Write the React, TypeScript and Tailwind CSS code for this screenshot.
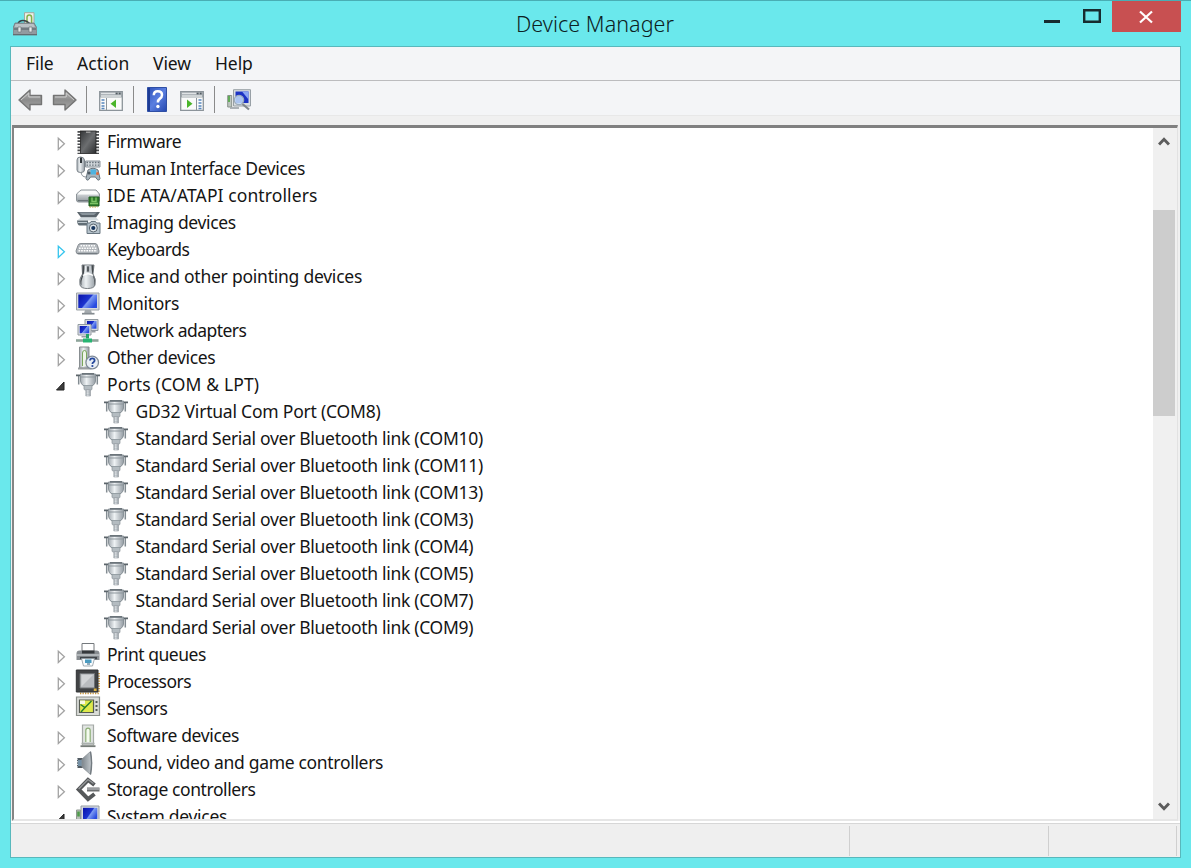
import React from "react";

type IconName =
  | "firmware" | "hid" | "ide" | "imaging" | "keyboard" | "mouse" | "monitor" | "network"
  | "other" | "port" | "printer" | "cpu" | "sensor" | "software" | "sound" | "storage" | "system";

const Defs = () => (
  <svg width="0" height="0" className="absolute" aria-hidden="true">
    <defs>
      <linearGradient id="metal" x1="0" x2="1" y1="0" y2="0">
        <stop offset="0" stopColor="#a4abb1" />
        <stop offset=".4" stopColor="#eef2f4" />
        <stop offset="1" stopColor="#959da4" />
      </linearGradient>
      <linearGradient id="metalV" x1="0" x2="0" y1="0" y2="1">
        <stop offset="0" stopColor="#f4f6f7" />
        <stop offset="1" stopColor="#8d959b" />
      </linearGradient>
      <linearGradient id="cone" x1="0" x2="1" y1="0" y2="0">
        <stop offset="0" stopColor="#7d868d" />
        <stop offset="1" stopColor="#c3c9cd" />
      </linearGradient>
      <linearGradient id="screen" x1="0" x2="1" y1="0" y2=".6">
        <stop offset="0" stopColor="#0a12a8" />
        <stop offset=".55" stopColor="#1c34d0" />
        <stop offset=".62" stopColor="#7c9af2" />
        <stop offset="1" stopColor="#2a4ce0" />
      </linearGradient>
      <linearGradient id="dark" x1="0" x2="1" y1="0" y2="1">
        <stop offset="0" stopColor="#343638" />
        <stop offset=".5" stopColor="#6c6e70" />
        <stop offset="1" stopColor="#2a2c2e" />
      </linearGradient>
      <linearGradient id="arrow" x1="0" x2="0" y1="0" y2="1">
        <stop offset="0" stopColor="#b9b9b9" />
        <stop offset=".5" stopColor="#8c8c8c" />
        <stop offset="1" stopColor="#a8a8a8" />
      </linearGradient>
      <linearGradient id="help" x1="0" x2="1" y1="0" y2="1">
        <stop offset="0" stopColor="#2c50b8" />
        <stop offset=".5" stopColor="#5b7fe0" />
        <stop offset="1" stopColor="#2447ae" />
      </linearGradient>
    </defs>
  </svg>
);

const glyphs: Record<IconName, React.ReactNode> = {
  firmware: (
    <>
      <path d="M3 1v23M21.500 1v23" stroke="#4a4c4e" strokeWidth="3" strokeDasharray="1.700 1.400" />
      <rect x="4.500" y="1" width="15.500" height="22.500" fill="url(#dark)" stroke="#222" strokeWidth=".8" />
      <path d="M10 1.500h4.500v1.500H10z" fill="#999" />
    </>
  ),
  hid: (
    <>
      <path d="M9.500 4h14.500v6h-14.500z" fill="#d3d9dd" stroke="#8b949b" />
      <path d="M10.500 5.500h13M10.500 8.200h13" stroke="#67727a" strokeWidth="1.300" strokeDasharray="1.500 1.300" />
      <path d="M1 3Q1 0 4.500 0T8.500 3v10q0 2.500-3.800 2.500T1 13z" fill="url(#metal)" stroke="#7d858c" />
      <path d="M4 .5h2V6H4z" fill="#30363a" />
      <path d="M5 15q.5 5 5 5" fill="none" stroke="#8b9399" />
      <path d="M12 13q5-3.500 10 0l2 8.500q-1.500 4-4.500-1.500h-5q-3 5.500-4.500 1.500z" fill="#a9b5bd" stroke="#69757e" />
      <path d="M14.500 12.500h5.500v5h-5.500z" fill="#4fb3df" />
      <circle cx="13" cy="16" r="1.600" fill="#4d5962" /><circle cx="21.500" cy="16.500" r="1.500" fill="#d9673d" />
    </>
  ),
  ide: (
    <>
      <path d="M5 6h15l3.500 4v6q0 2-2 2H2.500q-2 0-2-2v-6z" fill="url(#metalV)" stroke="#8d9499" />
      <path d="M2 9.500Q3.500 7 6 7h13q2 0 3 2.500v1H2z" fill="#fafbfb" />
      <path d="M2 16.500h10" stroke="#6d757a" />
      <path d="M13 13h10v9H13z" fill="#2f7d2b" stroke="#205e20" />
      <path d="M16 13.500v4h4v-4M14 19.500h8" fill="none" stroke="#7ec466" strokeWidth="1.400" />
      <path d="M13.500 23h8" stroke="#c4a23a" strokeDasharray="1.500 1" />
    </>
  ),
  imaging: (
    <>
      <path d="M1 1h23l-4 5.500H5z" fill="#59636a" />
      <path d="M3 1.500h18l-3 2.500H6z" fill="#89949b" />
      <path d="M5 6.500h15L23 9.500H1z" fill="#d2dade" />
      <path d="M1 9.500h11v5H3.500q-2 0-2.500-5z" fill="#626e76" />
      <path d="M2 11.500h9" stroke="#bcc6cc" />
      <path d="M11 12h3l1-1.500h4.500l1 1.500H24v10.500H11z" fill="#b4c1ca" stroke="#687680" />
      <circle cx="17.300" cy="17" r="4" fill="#e0e6ea" stroke="#59656e" />
      <circle cx="17.300" cy="17" r="2.100" fill="#16355d" />
    </>
  ),
  keyboard: (
    <>
      <path d="M5 5.500h14q2 0 2.500 2l1.500 5.500q.5 3-2 3H2.500q-2.500 0-2.500-3L2 7.500q.5-2 3-2z" fill="#b3b8bd" stroke="#888e93" />
      <path d="M4.500 7.700h14.500M3 10.200h17.500M2.500 12.700h18.500" stroke="#fff" strokeWidth="1.500" strokeDasharray="1.700 .9" />
      <path d="M1.500 15.500h20" stroke="#747b81" strokeWidth="1.200" />
    </>
  ),
  mouse: (
    <>
      <path d="M6 0h12l-1 9q3.500 5 2 11-1 3.500-7.500 3.500T4 20q-1.500-6 2.500-11z" fill="url(#metal)" stroke="#777d82" />
      <path d="M6.500 .2h2q.2 8-2 12.500-2 5-.6 8Q2.500 17 6.500 10zM17.500 .2h-2q.2 8 2 12.500 1.700 5 .6 8 2.500-4-1.300-11z" fill="#44494d" />
      <path d="M10.700 1h2.600v6h-2.600z" fill="#43494e" stroke="#cfd4d8" strokeWidth=".7" />
      <path d="M7 10.500q5-3.500 10 0" fill="none" stroke="#fff" strokeWidth="1.300" />
    </>
  ),
  monitor: (
    <>
      <path d="M.5 1h22.500v17H.5z" fill="#d7dadd" stroke="#9da3a8" />
      <path d="M2.300 2.500h18.700v13.500H2.300z" fill="url(#screen)" />
      <path d="M9 18h6l1 3.500H8z" fill="#a4aaae" />
      <path d="M6 21.700h12.500" stroke="#858c91" strokeWidth="1.700" />
    </>
  ),
  network: (
    <>
      <path d="M9 .5h13v11H9z" fill="#d3d8dc" stroke="#929aa1" />
      <path d="M11 2h9.500v7.700H11z" fill="url(#screen)" />
      <path d="M2 5.500h13v10.500H2z" fill="#dfe3e5" stroke="#929aa1" />
      <path d="M3.700 7h9.600v7.300H3.700z" fill="url(#screen)" />
      <path d="M5.500 17h6v1.500h-6zM15.500 12h4v1.500h-4z" fill="#969da3" />
      <path d="M10 15h3v4.500h-3z" fill="#21a567" />
      <path d="M0 21.500h22.500" stroke="#8ea49a" strokeWidth="2.600" />
      <path d="M7 19.500h9v4H7z" fill="#27b572" />
    </>
  ),
  other: (
    <>
      <path d="M3.500 1h9.500v21H3.500z" fill="url(#metal)" stroke="#888e91" />
      <path d="M6.500 20V7q0-2.500 2-2.500t2 2.500v13" fill="#eef4e8" stroke="#79a65b" />
      <path d="M2 22.500h13.500" stroke="#9a9ea1" strokeWidth="2" />
      <circle cx="16.200" cy="16.500" r="6.300" fill="#e9eff6" stroke="#808b99" strokeWidth="1.300" />
      <path d="M14 14.500q.2-2.100 2.300-2.100 2.300 0 2.300 2 0 1.200-1.200 1.900-1 .5-1 1.800" fill="none" stroke="#25479c" strokeWidth="1.800" />
      <circle cx="16.400" cy="20" r="1.100" fill="#25479c" />
    </>
  ),
  port: (
    <>
      <path d="M2.700 2v9.500M21.300 2v9.500" stroke="#838c92" strokeWidth="1.500" />
      <path d="M0 2.300h5M19 2.300h5" stroke="#5c656b" strokeWidth="1.700" />
      <path d="M4.500 1h15v7q0 3-3.500 5H8Q4.500 11 4.500 8z" fill="url(#metal)" stroke="#899298" />
      <path d="M6 0h12v1.700H6z" fill="#6c757b" />
      <path d="M5 4h14" stroke="#8e979d" />
      <path d="M8 12.500h8v3.500q0 1-1.500 1h-5Q8 17 8 16z" fill="#b4bcc1" stroke="#8a9399" strokeWidth=".7" />
      <path d="M9.800 17h4.700v6H9.800z" fill="url(#metal)" stroke="#99a0a5" strokeWidth=".6" />
      <path d="M10 19h4.300M10 21.200h4.300" stroke="#939ca2" strokeWidth=".6" />
    </>
  ),
  printer: (
    <>
      <path d="M6 .5h12V11H6z" fill="#fff" stroke="#74797d" />
      <path d="M3.500 7.500h17q3 0 3 3V17H.5v-6.500q0-3 3-3z" fill="#878c90" />
      <path d="M6 7.500h12.500v3H6z" fill="#34383b" />
      <path d="M1 12h22.500" stroke="#c8ccce" strokeWidth="1.300" />
      <path d="M4 15h17" stroke="#404549" strokeWidth="2.300" />
      <path d="M5.500 15.500h13l-2 7.500h-9z" fill="#f9fcfe" stroke="#8c979f" strokeWidth=".8" />
      <path d="M9 16.500h6.500V20H9z" fill="#4b9bc0" /><path d="M11 21h3" stroke="#355d79" />
    </>
  ),
  cpu: (
    <>
      <path d="M23 3v20M4 23.300h19" stroke="#c7953c" strokeWidth="1.800" strokeDasharray="1.300 1.200" />
      <path d="M.3 0h21.700v22H.3z" fill="#414345" stroke="#303234" />
      <path d="M4 3.500h14.500v14.500H4z" fill="#b9bcbf" stroke="#6d7073" />
      <path d="M5.500 5h11.500L5.500 16.500z" fill="#d2d4d6" />
      <path d="M17.800 18.500h2.800v2.500h-2.800z" fill="#ddb13d" />
    </>
  ),
  sensor: (
    <>
      <path d="M.5 0h23v18.500H.5z" fill="#dadcd8" stroke="#8b8f8b" strokeWidth="1.200" />
      <path d="M3.500 3h14v12.500h-14z" fill="#dfe94c" stroke="#555a51" strokeWidth="1.200" />
      <path d="M4 3.500h5v3.500H4z" fill="#f7f9e4" />
      <path d="M4.500 7.500 9 10.500 15.500 4M9.500 10 5 15" fill="none" stroke="#267e2d" strokeWidth="1.400" />
      <path d="M20.500 4v2M20.500 8v2M20.500 12v2" stroke="#555d56" strokeWidth="2" />
    </>
  ),
  software: (
    <>
      <path d="M6.500 1h11v20h-11z" fill="#e1e5e2" stroke="#a5aaa7" strokeWidth="1.200" />
      <path d="M9.800 18V6.500q0-2.300 2.200-2.300t2.200 2.300V18" fill="#f4fbef" stroke="#8dae77" strokeWidth="1.200" />
      <path d="M5.500 19.500h13" stroke="#abb2af" strokeWidth="1.600" />
      <path d="M4.500 22.200h15" stroke="#777d79" strokeWidth="1.800" />
    </>
  ),
  sound: (
    <>
      <path d="M1 7h7v10H1z" fill="#515a61" />
      <path d="M2 9h4v6H2z" fill="#7590a5" />
      <path d="M1.500 7.500v10" stroke="#d8dee2" strokeDasharray="1.300 1.300" />
      <path d="M6 8 14.500.500q2.300 11.500 0 23L6 16z" fill="url(#cone)" stroke="#8a9196" strokeWidth=".8" />
      <path d="M14.500.800q2.200 11 0 22.500" fill="none" stroke="#737b81" strokeWidth="1.400" />
    </>
  ),
  storage: (
    <>
      <path d="M18.500 7 12 2 2.700 11.500l9.300 9.500 6.500-5" fill="none" stroke="#55585a" strokeWidth="4" />
      <path d="M2.700 11 12 1.500l5.500 4" fill="none" stroke="#96999b" strokeWidth="1.300" />
      <path d="M11 11.500h12.500" stroke="#6c6f71" strokeWidth="4" />
      <path d="M11 11h12.500" stroke="#afb1b3" strokeWidth="1.400" />
    </>
  ),
  system: (
    <>
      <path d="M.5 5h4v17h-4z" fill="#b8c0b8" stroke="#8f9790" /><path d="M1.200 6.500h2.600v5H1.200z" fill="#4f9b4b" />
      <path d="M5 1h18v16H5z" fill="#d8dce0" stroke="#959ca2" />
      <path d="M7 2.800h14.300V15H7z" fill="url(#screen)" />
    </>
  ),
};

const DeviceIcon = ({ name }: { name: IconName }) => (
  <svg viewBox="0 0 24 24" className="size-6 shrink-0 overflow-visible">{glyphs[name]}</svg>
);

type Device = { label: string; icon: IconName; tracking: string; state?: "open" | "hover" };

const before: Device[] = [
  { label: "Firmware", icon: "firmware", tracking: "tracking-[-0.400px]" },
  { label: "Human Interface Devices", icon: "hid", tracking: "tracking-[-0.370px]" },
  { label: "IDE ATA/ATAPI controllers", icon: "ide", tracking: "tracking-[0.100px]" },
  { label: "Imaging devices", icon: "imaging", tracking: "tracking-[-0.330px]" },
  { label: "Keyboards", icon: "keyboard", tracking: "tracking-[-0.440px]", state: "hover" },
  { label: "Mice and other pointing devices", icon: "mouse", tracking: "tracking-[-0.240px]" },
  { label: "Monitors", icon: "monitor", tracking: "tracking-[-0.280px]" },
  { label: "Network adapters", icon: "network", tracking: "tracking-[-0.540px]" },
  { label: "Other devices", icon: "other", tracking: "tracking-[-0.350px]" },
  { label: "Ports (COM & LPT)", icon: "port", tracking: "tracking-[0.140px]", state: "open" },
];

const ports: { label: string; tracking: string }[] = [
  { label: "GD32 Virtual Com Port (COM8)", tracking: "tracking-[-0.210px]" },
  ...["COM10", "COM11", "COM13", "COM3", "COM4", "COM5", "COM7", "COM9"].map((com) => ({
    label: `Standard Serial over Bluetooth link (${com})`,
    tracking: "tracking-[-0.305px]",
  })),
];

const after: Device[] = [
  { label: "Print queues", icon: "printer", tracking: "tracking-[-0.470px]" },
  { label: "Processors", icon: "cpu", tracking: "tracking-[-0.530px]" },
  { label: "Sensors", icon: "sensor", tracking: "tracking-[-0.680px]" },
  { label: "Software devices", icon: "software", tracking: "tracking-[-0.360px]" },
  { label: "Sound, video and game controllers", icon: "sound", tracking: "tracking-[-0.310px]" },
  { label: "Storage controllers", icon: "storage", tracking: "tracking-[-0.420px]" },
  { label: "System devices", icon: "system", tracking: "tracking-[-0.310px]", state: "open" },
];

const Expander = ({ state }: { state?: "open" | "hover" }) => (
  <svg viewBox="0 0 12 27" className="mr-[9px] h-[27px] w-3 shrink-0">
    {state === "open" ? (
      <path d="M9 11v8H1.500z" fill="#3c3c3c" stroke="#222" />
    ) : (
      <path d="M3.300 10.200v11.300L9.400 15.800z" fill="#fff" stroke={state === "hover" ? "#35c5ee" : "#a3a3a3"} strokeWidth="1.300" />
    )}
  </svg>
);

const DeviceRow = ({ label, icon, tracking, state }: Device) => (
  <div className="flex h-[27px] items-center pl-[41px]">
    <Expander state={state} />
    <DeviceIcon name={icon} />
    <span className={`ml-[7px] whitespace-nowrap text-[17.500px] leading-[25px] ${tracking}`}>{label}</span>
  </div>
);

const PortRow = ({ label, tracking }: { label: string; tracking: string }) => (
  <div className="flex h-[27px] items-center pl-[90px]">
    <DeviceIcon name="port" />
    <span className={`ml-[7.500px] whitespace-nowrap text-[17.500px] leading-[25px] ${tracking}`}>{label}</span>
  </div>
);

const Tree = () => (
  <div className="h-[691px] min-w-0 flex-1 overflow-hidden bg-white text-[#151515]">
    {before.map((d) => <DeviceRow key={d.label} {...d} />)}
    {ports.map((p) => <PortRow key={p.label} {...p} />)}
    {after.map((d) => <DeviceRow key={d.label} {...d} />)}
  </div>
);

const Back = ({ flip = false }: { flip?: boolean }) => (
  <svg viewBox="0 0 25 22" className={flip ? "h-[22px] w-[25px] -scale-x-100" : "h-[22px] w-[25px]"}>
    <path d="M1 11 12 1v5.500h11.500v9H12V21z" fill="url(#arrow)" stroke="#747474" strokeWidth="1.400" strokeLinejoin="round" />
    <path d="M3 11 10.800 4v4H22" fill="none" stroke="#ccc" />
  </svg>
);

const PanelIcon = ({ right = false }: { right?: boolean }) => (
  <svg viewBox="0 0 24 20" className="h-5 w-6">
    <path d="M.7.700h22.600v18.600H.7z" fill="#fafbfb" stroke="#8c949a" strokeWidth="1.300" />
    <path d="M1 1h22v5.500H1z" fill="#9fa6ab" />
    <path d="M2 2.500h14M2 5h20" stroke="#dfe3e5" strokeWidth="1.300" />
    <path d="M17 2.500h1.500M20 2.500h1.500" stroke="#525b62" strokeWidth="1.500" />
    {right ? (
      <>
        <path d="M16.500 7v12" stroke="#8c949a" />
        <path d="M18.500 9h3M18.500 12h3M18.500 15h3M18.500 17.500h3" stroke="#5686bd" strokeWidth="1.300" />
        <path d="M7 8.500v8.500l5.500-4.200z" fill="#4ab52b" />
      </>
    ) : (
      <>
        <path d="M7.500 7v12" stroke="#8c949a" />
        <path d="M2.500 9h3M2.500 12h3M2.500 15h3M2.500 17.500h3" stroke="#5686bd" strokeWidth="1.300" />
        <path d="M17 8.500v8.500l-5.500-4.200z" fill="#4ab52b" />
      </>
    )}
  </svg>
);

const Separator = () => <div className="h-[27px] w-px bg-[#8a8a8a]" />;

const Toolbar = () => (
  <div className="flex h-[34px] items-start bg-[#f4f5f7] pl-[7px] pt-[5px]">
    <div className="flex h-[27px] items-center">
      <Back />
      <div className="ml-[9px]"><Back flip /></div>
      <div className="ml-[9px]"><Separator /></div>
      <div className="ml-[12px] mt-[3px]"><PanelIcon /></div>
      <div className="ml-[10px]"><Separator /></div>
      <svg viewBox="0 0 20 25" className="ml-[13px] h-[25px] w-5">
        <path d="M.5.500h19v24H.5z" fill="url(#help)" stroke="#2f4fa5" />
        <path d="M2 1v23" stroke="#1d3b95" strokeWidth="2" />
        <path d="M6.800 8.300q0-4 3.900-4 4.300 0 4.300 3.700 0 2.200-2.100 3.600-2 1.300-2 3.900" fill="none" stroke="#fff" strokeWidth="2.500" />
        <circle cx="10.900" cy="19.500" r="1.700" fill="#fff" />
      </svg>
      <div className="ml-[13px] mt-[3px]"><PanelIcon right /></div>
      <div className="ml-[10px]"><Separator /></div>
      <svg viewBox="0 0 24 22" className="ml-[12px] h-[22px] w-6">
        <path d="M.7 6.500h4V18h-4z" fill="#bdc5bf" stroke="#8a938d" /><path d="M2 7v6" stroke="#59a94d" strokeWidth="1.800" />
        <path d="M6.500.700H23.500V17H6.500z" fill="#d9dde0" stroke="#98a0a6" />
        <path d="M8.500 2.500h13v11.500h-13z" fill="#1c32c4" />
        <path d="m15 2.500 6.500 0v8z" fill="#8ba6f3" />
        <path d="M3 19h9" stroke="#a4aaae" strokeWidth="1.800" />
        <circle cx="12" cy="11" r="4.700" fill="#c6def8" fillOpacity=".85" stroke="#9eabb9" strokeWidth="1.200" />
        <path d="m15.500 15 6.500 5.500" stroke="#81878b" strokeWidth="2.200" />
      </svg>
    </div>
  </div>
);

const TitleBar = () => (
  <header className="grid h-[45px] grid-cols-[141px_1fr_148px] items-start">
    <svg viewBox="0 0 24 24" className="ml-[13px] mt-[11px] size-6">
      <path d="M11.500.700H21v12h-9.500z" fill="#eef0ea" stroke="#a4a8a0" />
      <path d="M14 12V5.500q0-2.500 2.300-2.500t2.300 2.500V12" fill="none" stroke="#82b14c" strokeWidth="1.500" />
      <path d="M5 12q1-3.500 5-3.500t7 3.500" fill="none" stroke="#384044" strokeWidth="1.700" />
      <path d="M2 11h19l3 5v7H0v-7z" fill="#929aa0" stroke="#6f777c" strokeWidth=".8" />
      <path d="M2.500 12h18l1.500 3H1.500z" fill="#bac1c5" />
      <path d="M1 17h22" stroke="#535c62" />
      <path d="M5 15h3v5H5zM16 15h3v5h-3z" fill="#e5e8e9" stroke="#70787d" strokeWidth=".7" />
      <path d="M0 22.500h24" stroke="#646c71" />
    </svg>
    <h1 className="pl-[6px] pt-[7px] text-center text-[21.500px] font-light leading-8 tracking-[0.050px] text-[#0c2022]">Device Manager</h1>
    <div className="flex">
      <svg viewBox="0 0 69 31" className="h-[31px] w-[69px]" fill="none" stroke="#172c2f">
        <path d="M1 20.500h16" strokeWidth="3" />
        <path d="M41.200 9.200h15.600v11.600H41.200z" strokeWidth="2.400" />
      </svg>
      <button className="flex h-[31px] w-[69px] items-center justify-center bg-[#c85051]" aria-label="Close">
        <svg viewBox="0 0 16 14" className="h-[14px] w-4 -translate-x-px"><path d="m2 1.500 12 11M14 1.500 2 12.500" stroke="#fff" strokeWidth="2.200" /></svg>
      </button>
    </div>
  </header>
);

const Chevron = ({ down = false }: { down?: boolean }) => (
  <svg viewBox="0 0 12 10" className={down ? "h-[10px] w-3 -scale-y-100" : "h-[10px] w-3"}>
    <path d="M1 8.500 6 3.300 11 8.500" fill="none" stroke="#5c5c5c" strokeWidth="3" />
  </svg>
);

export default function App() {
  return (
    <div className="flex h-[868px] w-[1191px] flex-col overflow-hidden border-t border-[#49aeb4] bg-[#6ae8ec] font-['Noto_Sans','Open_Sans',sans-serif]">
      <Defs />
      <TitleBar />
      <main className="ml-[10px] flex h-[812px] w-[1171px] flex-col border border-[#58b8bc] bg-[#f0f0f0]">
        <nav className="flex h-[34px] border-b border-[#bcbcbe] bg-[#f4f5f7] pl-[15px] text-[17.500px] leading-[33px] tracking-[-0.100px] text-[#151515]">
          <span className="w-[51px]">File</span>
          <span className="w-[76px] tracking-[0.100px]">Action</span>
          <span className="w-[62px]">View</span>
          <span>Help</span>
        </nav>
        <Toolbar />
        <div className="h-[10px] border-t border-[#e8e8e8] bg-[#f0f0f0]" />
        <section className="ml-px mr-[2px] flex h-[696px] border-b-2 border-l-2 border-r border-t-[3px] border-b-[#e6e6e6] border-l-[#858585] border-r-[#e2e2e2] border-t-[#808080]">
          <Tree />
          <aside className="flex w-6 flex-col items-center bg-[#f0f0f0] pr-[2px]">
            <div className="flex h-[82px] pt-[8px]"><Chevron /></div>
            <div className="h-[206px] w-[22px] bg-[#cdcdcd]" />
            <div className="mb-[7px] mt-auto"><Chevron down /></div>
          </aside>
        </section>
        <div className="h-[2px] bg-white" />
        <footer className="flex flex-1 border-t border-[#d7d7d7] bg-[#efefef] pb-px pt-[2px]">
          <div className="w-[839px] border-r border-[#cfcfcf]" />
          <div className="w-[199px] border-r border-[#cfcfcf]" />
          <div className="w-[128px] border-r border-[#cfcfcf]" />
        </footer>
      </main>
    </div>
  );
}
